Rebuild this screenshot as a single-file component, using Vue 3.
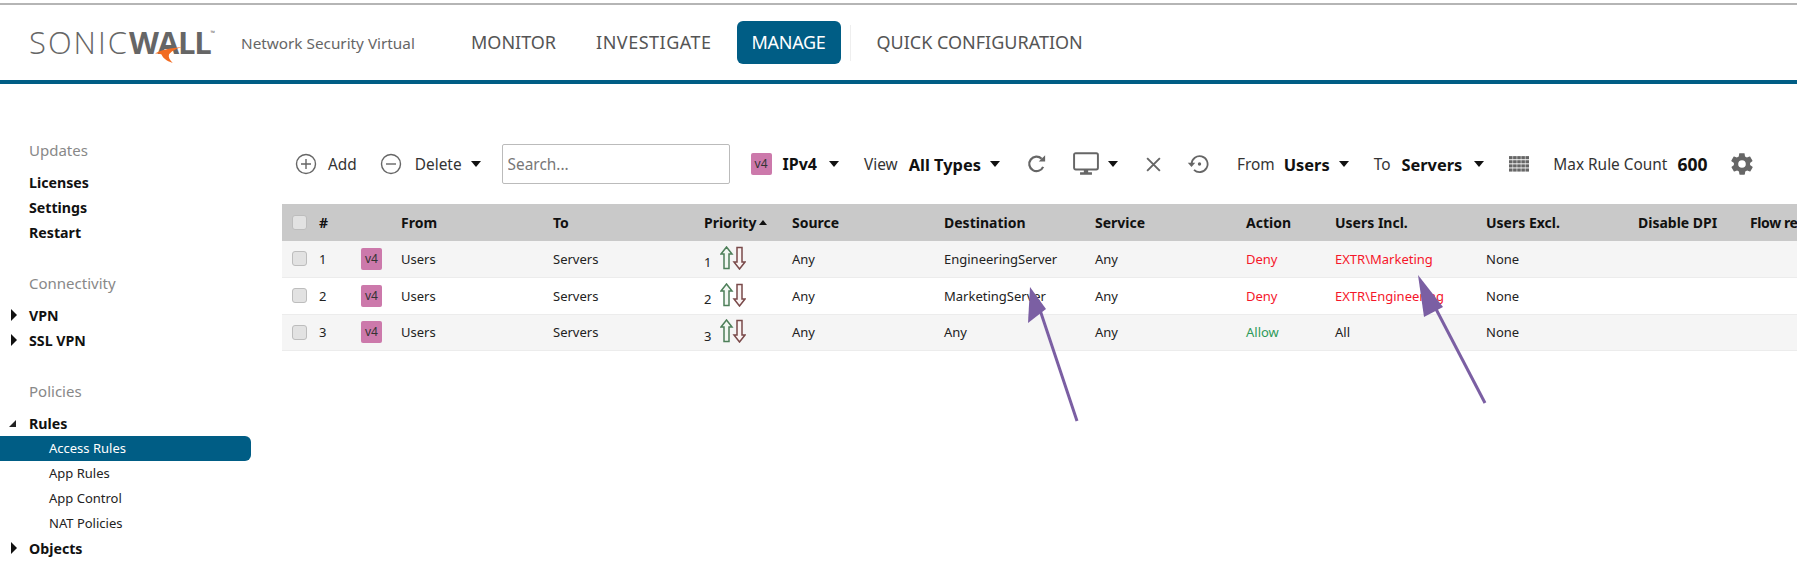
<template>
  <div class="page">
    <header class="top-bar">
      <div class="logo">
        <span class="logo-light">SONIC</span><span class="logo-bold">WALL</span><span class="logo-tm">™</span>
        <svg class="logo-swoosh" viewBox="0 0 30 20"><path d="M0 9C7 5 17 3 29 2C22 4 17 7 15 10C14 13 16 16 19 19C12 17 8 13 7 10C5 9 3 9 0 9Z" fill="#f26b21" /></svg>
      </div>
      <span class="product">Network Security Virtual</span>
      <nav class="nav">
        <a class="nav-item">MONITOR</a>
        <a class="nav-item wide">INVESTIGATE</a>
        <a class="nav-item active">MANAGE</a>
        <span class="nav-sep"></span>
        <a class="nav-item">QUICK CONFIGURATION</a>
      </nav>
    </header>

    <div class="content">
      <aside class="sidebar">
        <section v-for="group in menu" :key="group.title" class="menu-group">
          <div class="menu-title">{{ group.title }}</div>
          <div v-for="item in group.items" :key="item.label" class="menu-item" :class="{ sub: item.sub, selected: item.selected, bold: !item.sub }">
            <span v-if="item.arrow === 'right'" class="tri-right"></span>
            <span v-if="item.arrow === 'down'" class="tri-down"></span>
            {{ item.label }}
          </div>
        </section>
      </aside>

      <main class="main">
        <div class="toolbar">
          <svg class="ic-circle" viewBox="0 0 22 22"><circle cx="11" cy="11" r="9.5" /><path d="M11 6v10M6 11h10" /></svg>
          <span class="t-add">Add</span>
          <svg class="ic-circle t-del-ic" viewBox="0 0 22 22"><circle cx="11" cy="11" r="9.5" /><path d="M6 11h10" /></svg>
          <span class="t-del">Delete</span>
          <span class="caret"></span>
          <input class="search" placeholder="Search..." />
          <span class="badge t-badge">v4</span>
          <b class="t-b1">IPv4</b>
          <span class="caret"></span>
          <span class="t-view">View</span>
          <b class="t-b2">All Types</b>
          <span class="caret"></span>
          <svg class="ic-refresh" viewBox="0 0 20 20"><path d="M15.6 12.6A6.6 6.6 0 1 1 14.2 5.2" /><path class="fill" d="M11.6 7.8L17.4 7.8L17.4 2Z" /></svg>
          <svg class="ic-monitor" viewBox="0 0 24 22"><rect x="1" y="1" width="22" height="15" rx="1.5" /><path class="fill" d="M10 16h4v2.5h3.5V21h-11v-2.5H10Z" /></svg>
          <span class="caret"></span>
          <svg class="ic-x" viewBox="0 0 16 16"><path d="M2 2L14 14M14 2L2 14" /></svg>
          <svg class="ic-history" viewBox="0 0 22 20"><path d="M4.6 10A8 8 0 1 1 7 15.8" /><path class="fill" d="M0.8 8.8H8.2L4.5 13Z" /><circle class="fill" cx="12.5" cy="10" r="1.7" /></svg>
          <span class="t-from">From</span>
          <b class="t-b3">Users</b>
          <span class="caret"></span>
          <span class="t-to">To</span>
          <b class="t-b4">Servers</b>
          <span class="caret"></span>
          <svg class="ic-grid" viewBox="0 0 19 15"><rect v-for="c in gridCells" :key="c.k" :x="c.x" :y="c.y" width="3.4" height="3" /></svg>
          <span class="t-max">Max Rule Count</span>
          <b class="t-b5">600</b>
          <svg class="ic-gear" viewBox="0 0 24 24"><path d="M19.4 13c0-.3.1-.7.1-1s0-.7-.1-1l2.1-1.6c.2-.2.2-.4.1-.6l-2-3.5c-.1-.2-.4-.3-.6-.2l-2.5 1a7.3 7.3 0 0 0-1.7-1l-.4-2.6c0-.3-.2-.4-.5-.4h-4c-.3 0-.5.1-.5.4l-.4 2.6c-.6.3-1.2.6-1.7 1l-2.5-1c-.2-.1-.5 0-.6.2l-2 3.5c-.1.2-.1.5.1.6L4.6 11c0 .3-.1.7-.1 1s0 .7.1 1l-2.1 1.6c-.2.2-.2.4-.1.6l2 3.5c.1.2.4.3.6.2l2.5-1c.5.4 1.1.7 1.7 1l.4 2.6c0 .3.2.4.5.4h4c.3 0 .5-.1.5-.4l.4-2.6c.6-.3 1.2-.6 1.7-1l2.5 1c.2.1.5 0 .6-.2l2-3.5c.1-.2.1-.4-.1-.6ZM12 15.5a3.5 3.5 0 1 1 0-7 3.5 3.5 0 0 1 0 7Z" /></svg>
        </div>

        <div class="table">
          <div class="row head">
            <span class="check"></span>
            <span v-for="h in headers" :key="h" class="cell">{{ h }}<i v-if="h === 'Priority'" class="sort"></i></span>
          </div>
          <div v-for="r in rules" :key="r.id" class="row body">
            <span class="check"></span>
            <span class="cell">{{ r.id }}</span>
            <span class="cell"><span class="badge">v4</span></span>
            <span class="cell">Users</span>
            <span class="cell">Servers</span>
            <span class="cell prio">
              <span class="prio-num">{{ r.id }}</span>
              <svg class="prio-arrows" viewBox="0 0 26 24">
                <path class="up" d="M6.5 1L12 8H9V22.5H4V8H1Z" />
                <path class="down" d="M19.5 23L25 16H22V1.5H17V16H14Z" />
              </svg>
            </span>
            <span class="cell">Any</span>
            <span class="cell">{{ r.dest }}</span>
            <span class="cell">Any</span>
            <span class="cell" :class="r.action === 'Deny' ? 'red' : 'green'">{{ r.action }}</span>
            <span class="cell" :class="{ red: r.action === 'Deny' }">{{ r.users }}</span>
            <span class="cell">None</span>
            <span class="cell"></span>
            <span class="cell"></span>
          </div>
        </div>
      </main>
    </div>

    <svg class="callouts" viewBox="0 0 1797 568">
      <path d="M1077 421L1036 298" />
      <path d="M1485 403L1425 288" />
      <polygon points="1030,287 1046,309 1028,323" />
      <polygon points="1418,275 1443,307 1424,317" />
    </svg>
  </div>
</template>

<script setup>
const menu = [
  { title: 'Updates', items: [{ label: 'Licenses' }, { label: 'Settings' }, { label: 'Restart' }] },
  { title: 'Connectivity', items: [{ label: 'VPN', arrow: 'right' }, { label: 'SSL VPN', arrow: 'right' }] },
  {
    title: 'Policies',
    items: [
      { label: 'Rules', arrow: 'down' },
      { label: 'Access Rules', sub: true, selected: true },
      { label: 'App Rules', sub: true },
      { label: 'App Control', sub: true },
      { label: 'NAT Policies', sub: true },
      { label: 'Objects', arrow: 'right' }
    ]
  }
]

const headers = ['#', '', 'From', 'To', 'Priority', 'Source', 'Destination', 'Service', 'Action', 'Users Incl.', 'Users Excl.', 'Disable DPI', 'Flow re']

const rules = [
  { id: 1, dest: 'EngineeringServer', action: 'Deny', users: 'EXTR\\Marketing' },
  { id: 2, dest: 'MarketingServer', action: 'Deny', users: 'EXTR\\Engineering' },
  { id: 3, dest: 'Any', action: 'Allow', users: 'All' }
]

const gridCells = []
for (let y = 0; y < 4; y++) {
  for (let x = 0; x < 5; x++) {
    gridCells.push({ k: x + '-' + y, x: x * 3.9, y: y * 3.9 })
  }
}
</script>

<style>
html, body {
  margin: 0;
  background: #fff;
  overflow: hidden;
}
</style>

<style scoped>
.page {
  position: relative;
  width: 1797px;
  height: 568px;
  overflow: hidden;
  padding-top: 3px;
  box-sizing: border-box;
  font-family: "Noto Sans", "DejaVu Sans", sans-serif;
  color: #222;
}

.top-bar {
  display: flex;
  align-items: center;
  height: 81px;
  box-sizing: border-box;
  border-top: 2px solid #b5b5b5;
  border-bottom: 4px solid #005d85;
  padding-left: 29px;
}

.logo {
  position: relative;
  display: flex;
  align-items: baseline;
  width: 212px;
  font-family: "Open Sans", sans-serif;
  font-size: 31px;
  color: #666;
  line-height: 1;
}

.logo-light {
  font-weight: 300;
  letter-spacing: 2px;
}

.logo-bold {
  font-weight: 700;
  letter-spacing: -1.2px;
}

.logo-tm {
  font-size: 6px;
  align-self: flex-start;
  margin-top: 3px;
}

.logo-swoosh {
  position: absolute;
  left: 126px;
  top: 18px;
  width: 28px;
  height: 19px;
}

.product {
  width: 215px;
  font-size: 15.3px;
  color: #666;
}

.nav {
  display: flex;
  align-items: center;
}

.nav-item {
  font-size: 18px;
  color: #555;
  padding: 0 15px;
  height: 43px;
  line-height: 43px;
  border-radius: 6px;
  margin-right: 10px;
  box-sizing: border-box;
}

.nav-item.wide {
  letter-spacing: 0.5px;
}

.nav-item.active {
  background: #005d85;
  color: #fff;
  margin-right: 9px;
  letter-spacing: -0.3px;
}

.nav-sep {
  width: 1px;
  height: 36px;
  background: #eee;
  margin-right: 11px;
}

.content {
  display: flex;
}

.sidebar {
  width: 282px;
  flex: none;
  padding-top: 54px;
  font-size: 13px;
}

.menu-group {
  margin-bottom: 26px;
}

.menu-title {
  padding-left: 29px;
  height: 25px;
  line-height: 25px;
  font-size: 15px;
  color: #888;
  margin-bottom: 7px;
}

.menu-item {
  position: relative;
  height: 25px;
  line-height: 25px;
  padding-left: 29px;
  width: 251px;
  box-sizing: border-box;
  color: #222;
}

.menu-item.bold {
  font-weight: 700;
  font-size: 14.2px;
  color: #111;
}

.menu-item.sub {
  padding-left: 49px;
  font-size: 13px;
}

.menu-item.selected {
  background: #005d85;
  color: #fff;
  border-radius: 0 6px 6px 0;
}

.tri-right {
  position: absolute;
  left: 11px;
  top: 6px;
  border-left: 6px solid #111;
  border-top: 6px solid transparent;
  border-bottom: 6px solid transparent;
}

.tri-down {
  position: absolute;
  left: 9px;
  top: 9px;
  border-right: 7px solid #222;
  border-top: 7px solid transparent;
}

.main {
  flex: 1;
  min-width: 0;
}

.toolbar {
  display: flex;
  align-items: center;
  height: 40px;
  margin-top: 60px;
  font-size: 15.4px;
  color: #333;
  white-space: nowrap;
}

.toolbar b {
  color: #111;
  font-size: 16.4px;
}

.toolbar svg {
  flex: none;
  fill: none;
  stroke: #666;
}

.toolbar svg .fill {
  fill: #666;
  stroke: none;
}

.ic-circle {
  width: 22px;
  height: 22px;
  margin-left: 13px;
  stroke-width: 1.4;
}

.t-add {
  margin-left: 11px;
}

.ic-circle.t-del-ic {
  margin-left: 23px;
}

.t-del {
  margin-left: 13px;
}

.caret {
  flex: none;
  margin-left: 9px;
  border-top: 6px solid #111;
  border-left: 5.5px solid transparent;
  border-right: 5.5px solid transparent;
}

.search {
  width: 228px;
  height: 40px;
  margin-left: 21px;
  padding: 0 5px;
  box-sizing: border-box;
  border: 1px solid #bbb;
  border-radius: 2px;
  font: inherit;
  outline: none;
}

.search::placeholder {
  color: #777;
}

.badge {
  display: inline-block;
  width: 21px;
  height: 22px;
  line-height: 21px;
  text-align: center;
  background: #cc79ab;
  border-radius: 2px;
  font-size: 12px;
  color: #333;
}

.t-badge {
  flex: none;
  margin-left: 21px;
}

.toolbar .t-b1 {
  margin-left: 11px;
  margin-right: 3px;
  font-size: 16px;
}

.t-view {
  margin-left: 25px;
}

.t-b2 {
  margin-left: 11px;
}

.ic-refresh {
  width: 22px;
  height: 22px;
  margin-left: 26px;
  stroke-width: 2;
}

.ic-monitor {
  width: 26px;
  height: 24px;
  margin-left: 25px;
  stroke-width: 1.8;
}

.ic-x {
  width: 17px;
  height: 17px;
  margin-left: 27px;
  stroke-width: 1.8;
}

.ic-history {
  width: 22px;
  height: 20px;
  margin-left: 25px;
  stroke-width: 1.8;
}

.t-from {
  margin-left: 28px;
}

.t-b3 {
  margin-left: 9px;
}

.t-to {
  margin-left: 25px;
}

.t-b4 {
  margin-left: 11px;
  margin-right: 3px;
}

.toolbar .ic-grid {
  width: 20px;
  height: 16px;
  margin-left: 25px;
  fill: #666;
  stroke: none;
}

.t-max {
  margin-left: 24px;
}

.toolbar .t-b5 {
  margin-left: 10px;
  font-size: 17.5px;
}

.toolbar .ic-gear {
  width: 26px;
  height: 26px;
  margin-left: 22px;
  fill: #666;
  stroke: none;
}

.table {
  margin-top: 20px;
  font-size: 13px;
}

.row {
  display: grid;
  grid-template-columns: 27px 42px 40px 152px 151px 88px 152px 151px 151px 89px 151px 152px 112px 60px;
  align-items: center;
  padding-left: 10px;
  white-space: nowrap;
}

.row.head {
  height: 37px;
  background: #c9c9c9;
  font-weight: 700;
  font-size: 14px;
  color: #111;
}

.row.head .cell:last-child {
  letter-spacing: -0.4px;
}

.row.body {
  height: 36.8px;
  border-bottom: 1px solid #ececec;
  box-sizing: border-box;
}

.row.body:nth-child(even) {
  background: #f5f5f5;
}

.check {
  width: 15px;
  height: 15px;
  background: #e2e2e2;
  border: 1px solid #bdbdbd;
  border-radius: 3px;
  box-sizing: border-box;
}

.sort {
  display: inline-block;
  vertical-align: 3px;
  margin-left: 3px;
  border-bottom: 5px solid #111;
  border-left: 4.5px solid transparent;
  border-right: 4.5px solid transparent;
}

.prio {
  display: flex;
  align-items: center;
}

.prio-num {
  margin-top: 7px;
  margin-right: 9px;
}

.prio-arrows {
  width: 26px;
  height: 24px;
  margin-top: -2px;
}

.prio-arrows .up {
  fill: #f2f7f2;
  stroke: #4d7f59;
  stroke-width: 1.5;
}

.prio-arrows .down {
  fill: #fbf4f4;
  stroke: #7a4a4a;
  stroke-width: 1.5;
}

.red {
  color: #f5162a;
}

.green {
  color: #2e9a5a;
}

.callouts {
  position: absolute;
  left: 0;
  top: 0;
  width: 1797px;
  height: 568px;
  pointer-events: none;
}

.callouts path {
  stroke: #7b5fa3;
  stroke-width: 3;
  fill: none;
}

.callouts polygon {
  fill: #7b5fa3;
}
</style>
